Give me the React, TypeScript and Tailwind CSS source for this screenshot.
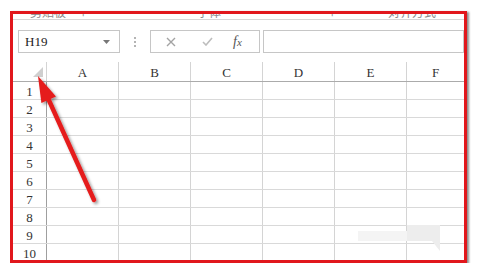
import { Fragment } from "react";

const cols = ["A", "B", "C", "D", "E", "F"];
const rows = [1, 2, 3, 4, 5, 6, 7, 8, 9, 10];
const serif = "font-['Liberation_Serif',serif]";

export default function App() {
  return (
    <div className="relative h-[263px] w-[477px] overflow-hidden bg-white pl-[10px] pt-[11px]">
      <div className="h-[252px] w-[457px] overflow-hidden border-[3px] border-[#e1171c] shadow-[2px_1px_2px_rgba(0,0,0,0.45)]">
        {/* ribbon group labels, only their lower edge shows */}
        <div className="flex h-[6px] items-end overflow-hidden border-b border-[#d6d6d6] font-['Noto_Sans_CJK_SC',sans-serif] text-[12px] leading-[12px] text-[#8a8a8a]">
          <span className="ml-[17px] mb-[1px]">剪贴板</span>
          <span className="ml-[16px] mb-[1px]">⌐</span>
          <span className="ml-[108px] mb-[1px]">字体</span>
          <span className="ml-[110px] mb-[1px]">⌐</span>
          <span className="ml-[50px] mb-[1px]">对齐方式</span>
        </div>

        <FormulaBar />

        {/* column header */}
        <div className="flex h-[20px] border-b border-[#ababab] bg-white">
          <div className="relative w-[34px] shrink-0 border-r border-[#d4d4d4]">
            <svg className="absolute bottom-[4px] right-[3px]" width="10" height="10" viewBox="0 0 10 10">
              <polygon points="10,0 10,10 0,10" fill="#cfcfcf" />
            </svg>
          </div>
          {cols.map((c, i) => (
            <div
              key={c}
              className={`flex items-center justify-center pt-[2px] text-[13px] text-[#333] ${serif} ${
                i === cols.length - 1 ? "flex-1" : "w-[72px] shrink-0 border-r border-[#d4d4d4]"
              }`}
            >
              {c}
            </div>
          ))}
        </div>

        {/* grid */}
        {rows.map((r) => (
          <div key={r} className="flex h-[18px] border-b border-[#d9d9d9]">
            <div className={`flex w-[34px] shrink-0 items-center justify-center border-r border-[#9f9f9f] pt-[2px] text-[13px] text-[#333] ${serif}`}>
              {r}
            </div>
            {cols.map((c, i) => (
              <Fragment key={c}>
                <div className={i === cols.length - 1 ? "flex-1" : "w-[72px] shrink-0 border-r border-[#d4d4d4]"} />
              </Fragment>
            ))}
          </div>
        ))}
      </div>

      {/* faint watermark, bottom right */}
      <svg className="pointer-events-none absolute left-0 top-0" width="477" height="263">
        <rect x="358" y="231" width="50" height="10" fill="#f4f4f4" />
        <polygon points="407,225 440,225 440,251 432,241 407,241" fill="#ededed" />
      </svg>

      {/* annotation arrow */}
      <svg className="pointer-events-none absolute left-0 top-0" width="477" height="263">
        <defs>
          <filter id="sh" x="-50%" y="-50%" width="200%" height="200%">
            <feDropShadow dx="2" dy="2" stdDeviation="1.6" floodColor="#000" floodOpacity="0.4" />
          </filter>
        </defs>
        <g filter="url(#sh)">
          <line x1="47" y1="96" x2="94" y2="200" stroke="#e51d1d" strokeWidth="4.5" strokeLinecap="round" />
          <polygon points="38,76 56,96.4 41.4,103" fill="#e51d1d" />
        </g>
      </svg>
    </div>
  );
}

function FormulaBar() {
  return (
    <div className="flex h-[42px] items-start pl-[5px] pt-[10px]">
      <div className="flex h-[23px] w-[102px] shrink-0 items-center justify-between border border-[#c6c6c6] bg-white pl-[6px] pr-[9px]">
        <span className={`text-[13px] text-[#222] ${serif}`}>H19</span>
        <svg width="7" height="4" viewBox="0 0 7 4">
          <polygon points="0,0 7,0 3.5,4" fill="#777" />
        </svg>
      </div>

      <div className="flex h-[23px] w-[30px] shrink-0 flex-col items-center justify-center gap-[2px]">
        <span className="h-[2px] w-[2px] bg-[#b4b4b4]" />
        <span className="h-[2px] w-[2px] bg-[#b4b4b4]" />
        <span className="h-[2px] w-[2px] bg-[#b4b4b4]" />
      </div>

      <div className="flex h-[23px] w-[110px] shrink-0 items-center border border-[#c6c6c6] bg-white">
        <svg className="ml-[15px]" width="10" height="10" viewBox="0 0 10 10">
          <path d="M1 1 L9 9 M9 1 L1 9" stroke="#a3a3a3" strokeWidth="1.4" />
        </svg>
        <svg className="ml-[26px]" width="11" height="9" viewBox="0 0 11 9">
          <path d="M1 5 L4 8 L10 1" stroke="#bdbdbd" strokeWidth="1.6" fill="none" />
        </svg>
        <span className="ml-[20px] font-['Liberation_Serif',serif] text-[14px] italic text-[#555]">
          f<span className="text-[11px]">x</span>
        </span>
      </div>

      <div className="ml-[3px] h-[23px] flex-1 border border-[#c6c6c6] bg-white" />
    </div>
  );
}
